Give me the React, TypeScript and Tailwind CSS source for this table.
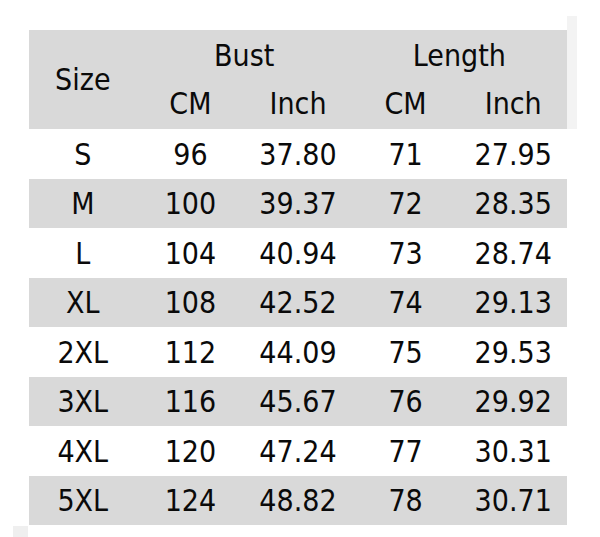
import React from "react";

const rows: [string, string, string, string, string][] = [
  ["S", "96", "37.80", "71", "27.95"],
  ["M", "100", "39.37", "72", "28.35"],
  ["L", "104", "40.94", "73", "28.74"],
  ["XL", "108", "42.52", "74", "29.13"],
  ["2XL", "112", "44.09", "75", "29.53"],
  ["3XL", "116", "45.67", "76", "29.92"],
  ["4XL", "120", "47.24", "77", "30.31"],
  ["5XL", "124", "48.82", "78", "30.71"],
];

export default function App() {
  return (
    <div
      className="w-[600px] h-[537px] bg-white pt-[16px] overflow-hidden text-[#0a0a0a] text-[30px] leading-none"
      style={{ fontFamily: '"DejaVu Sans Condensed", "DejaVu Sans", sans-serif' }}
    >
      <div className="flex items-start pl-[29px]">
        <div className="w-[538px] mt-[14px]">
          <div className="grid grid-cols-5 grid-rows-[49.5px_49.5px] bg-[#d9d9d9]">
            <div className="row-span-2 flex items-center justify-center">Size</div>
            <div className="col-span-2 flex items-center justify-center pt-[2px]">Bust</div>
            <div className="col-span-2 flex items-center justify-center pt-[2px]">Length</div>
            <div className="flex items-center justify-center">CM</div>
            <div className="flex items-center justify-center">Inch</div>
            <div className="flex items-center justify-center">CM</div>
            <div className="flex items-center justify-center">Inch</div>
          </div>
          {rows.map((r, i) => (
            <div
              key={r[0]}
              className={
                "grid grid-cols-5 h-[49.5px] " + (i % 2 === 1 ? "bg-[#d9d9d9]" : "bg-white")
              }
            >
              {r.map((c, j) => (
                <div key={j} className="flex items-center justify-center pt-[2px]">
                  {c}
                </div>
              ))}
            </div>
          ))}
        </div>
        <div className="w-[10px] h-[113px] bg-[#f3f3f3]" />
      </div>
      <div className="ml-[13px] mt-[1px] w-[15px] h-[11px] bg-[#efefef]" />
    </div>
  );
}
